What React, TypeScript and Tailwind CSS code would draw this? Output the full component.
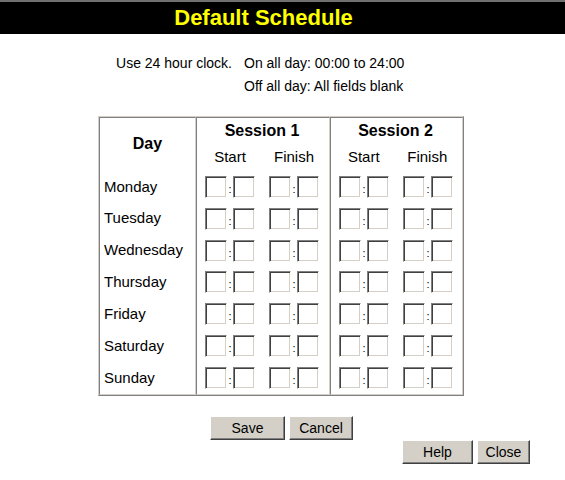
import React from "react";

const days = ["Monday", "Tuesday", "Wednesday", "Thursday", "Friday", "Saturday", "Sunday"];

function Box() {
  return (
    <div className="w-[22px] h-[22px] bg-white border border-t-[#808080] border-l-[#808080] border-b-white border-r-white shadow-[inset_1px_1px_0_#404040,inset_-1px_-1px_0_#d4d0c8]" />
  );
}

function TimePair() {
  return (
    <div className="flex items-center">
      <Box />
      <div className="w-[6px] text-center text-[11px] leading-none pt-[5px] text-black">:</div>
      <Box />
    </div>
  );
}

function Btn({ label, w }: { label: string; w: string }) {
  return (
    <button
      className={`${w} h-[24px] bg-[#d4d0c8] text-[14px] text-black border border-t-white border-l-white border-b-[#404040] border-r-[#404040] shadow-[inset_-1px_-1px_0_#808080] flex items-center justify-center`}
    >
      {label}
    </button>
  );
}

function SessionCol({ title, w }: { title: string; w: string }) {
  return (
    <div className={`${w} border border-t-[#808080] border-l-[#808080] border-b-[#d4d0c8] border-r-[#d4d0c8] flex flex-col pl-[8px] pr-[10px]`}>
      <div className="h-[26px] flex items-center justify-center font-bold text-[16px] pt-[1px]">{title}</div>
      <div className="h-[27px] flex gap-[14px] text-[15px]">
        <div className="w-[50px] flex items-center justify-center">Start</div>
        <div className="w-[50px] flex items-center justify-center">Finish</div>
      </div>
      {days.map((d) => (
        <div key={d} className="h-[32px] flex items-center gap-[14px]">
          <TimePair />
          <TimePair />
        </div>
      ))}
    </div>
  );
}

export default function App() {
  return (
    <div className="w-[565px] h-[480px] bg-white text-black font-['Liberation_Sans',Arial,sans-serif] relative overflow-hidden">
      <div className="h-[2px] bg-[#707070]" />
      <div className="h-[32px] bg-black flex items-center justify-center pr-[38px]">
        <span className="text-[#ffff00] font-bold text-[22px] leading-none pb-[1px]">Default Schedule</span>
      </div>
      <div className="pt-[18px] flex text-[14px] leading-[23px]">
        <div className="w-[232px] text-right">Use 24 hour clock.</div>
        <div className="pl-[12px]">
          <div>On all day: 00:00 to 24:00</div>
          <div>Off all day: All fields blank</div>
        </div>
      </div>
      <div className="mt-[18px] ml-[98px] w-[366px] h-[280px] flex border border-t-[#d4d0c8] border-l-[#d4d0c8] border-b-[#808080] border-r-[#808080]">
        <div className="w-[97px] border border-t-[#808080] border-l-[#808080] border-b-[#d4d0c8] border-r-[#d4d0c8] flex flex-col">
          <div className="h-[53px] flex items-center justify-center font-bold text-[16px]">Day</div>
          {days.map((d) => (
            <div key={d} className="h-[32px] flex items-center pl-[4px] text-[15px]">
              {d}
            </div>
          ))}
        </div>
        <SessionCol title="Session 1" w="w-[134px]" />
        <SessionCol title="Session 2" w="w-[133px]" />
      </div>
      <div className="mt-[20px] flex gap-[4px] pl-[210px]">
        <Btn label="Save" w="w-[75px]" />
        <Btn label="Cancel" w="w-[64px]" />
      </div>
      <div className="flex justify-end gap-[4px] pr-[35px]">
        <Btn label="Help" w="w-[71px]" />
        <Btn label="Close" w="w-[53px]" />
      </div>
    </div>
  );
}
